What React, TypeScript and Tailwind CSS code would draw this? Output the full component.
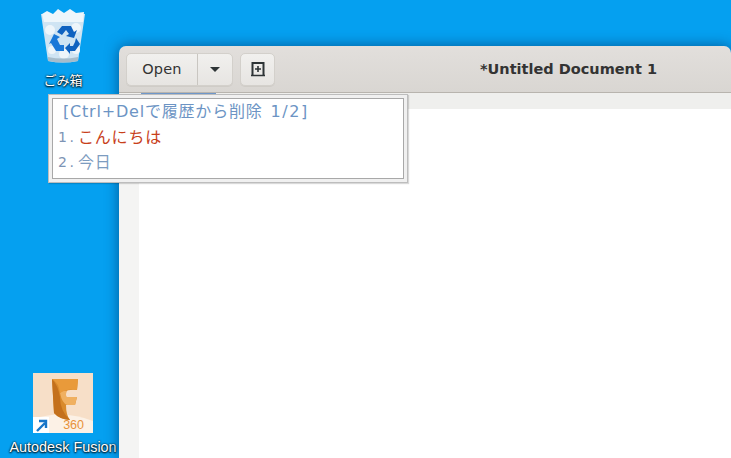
import type { ReactNode } from "react";

const uiFont = "font-['DejaVu_Sans','Noto_Sans_CJK_JP',sans-serif]";

function DesktopIcon({
  label,
  className,
  labelClass,
  children,
}: {
  label: string;
  className: string;
  labelClass: string;
  children: ReactNode;
}) {
  return (
    <div className={`absolute flex flex-col items-center ${className}`}>
      {children}
      <span
        className={`whitespace-nowrap text-white [text-shadow:0_1px_2px_#000,0_0_2px_#000] ${labelClass}`}
      >
        {label}
      </span>
    </div>
  );
}

function RecycleBin() {
  return (
    <svg width="46" height="56" viewBox="0 0 46 56">
      <path d="M1 6 L45 6 L38 53 Q23 56 8 53 Z" fill="#cfe4f3" />
      <path d="M2 6 L7 3 L13 6 L18 1 L24 5 L30 1 L36 5 L44 4 L43 14 L4 14 Z" fill="#eef6fb" />
      <g fill="#eef5fa">
        <circle cx="10" cy="22" r="5" />
        <circle cx="36" cy="20" r="5" />
        <circle cx="12" cy="42" r="4" />
        <circle cx="24" cy="46" r="5" />
        <circle cx="36" cy="42" r="4" />
      </g>
      <path d="M8 49 Q23 52 38 49 L38 53 Q23 56 8 53 Z" fill="#a6bccb" />
      <path d="M22 18 L31 18 L34 24 L37 22 L34 30 L26 28 L29 26 L26 22 L22 27 L17 24 Z" fill="#0f62c0" />
      <path d="M14 26 L20 29 L17 31 L20 37 L24 37 L24 43 L16 43 L11 35 L9 36 Z" fill="#1a78d8" />
      <path d="M36 30 L40 36 L35 43 L30 43 L30 46 L25 40 L30 35 L30 38 L33 38 L35 34 Z" fill="#0f62c0" />
    </svg>
  );
}

function FusionIcon() {
  return (
    <div className="relative h-[60px] w-[60px] overflow-hidden bg-[#f7dfc8]">
      <svg width="60" height="60" viewBox="0 0 60 60" className="absolute left-0 top-0">
        <path d="M0 46 Q30 36 60 48 L60 60 L0 60 Z" fill="#fcf1e6" />
        <path d="M19 6 H45 L44 17 Q36 16 31 19 L31 24 H44 L42 32 H33 Q33 42 37 47 Q26 46 21 40 Z" fill="#d98a2c" />
        <path d="M19 6 Q25 12 27 24 Q27 38 37 47 Q26 46 21 40 Z" fill="#c4701c" />
        <path d="M27 20 Q30 17 34 18 Q32 22 34 24 H44 L42 32 H34 Q29 30 27 20 Z" fill="#f0b060" />
        <path d="M19 6 H45 L44 17 Q34 15 27 20 Q26 10 19 6 Z" fill="#e99a3a" />
      </svg>
      <div className="absolute bottom-0 left-0 flex h-[16px] w-[16px] items-center justify-center bg-white">
        <svg width="13" height="13" viewBox="0 0 13 13">
          <path d="M2 12 L10 4 M4 2 H11 V9" fill="none" stroke="#1976c8" strokeWidth="2.4" />
        </svg>
      </div>
      <span className="absolute bottom-[2px] right-[9px] font-['Liberation_Sans',sans-serif] text-[12.5px] leading-[12px] text-[#e8923c]">
        360
      </span>
    </div>
  );
}

function Toolbar() {
  return (
    <div className="flex h-[47px] items-center rounded-t-[7px] border-b border-[#b8b4ae] bg-gradient-to-b from-[#e2dfdc] to-[#d9d6d2] pl-[7px]">
      <div className="flex h-[33px] items-stretch rounded-[5px] border border-[#d3d0cb] bg-gradient-to-b from-[#f1f0ee] to-[#e7e5e2] text-[#333] shadow-[0_1px_0_#cfccc7]">
        <span className="flex w-[71px] items-center justify-center border-r border-[#c9c6c1] pt-[1px] text-[14.5px] tracking-[0.2px]">Open</span>
        <span className="flex w-[34px] items-center justify-center">
          <span className="mt-[1px] h-0 w-0 border-x-[5px] border-t-[5px] border-x-transparent border-t-[#2e3436]" />
        </span>
      </div>
      <div className="ml-[7px] flex h-[33px] w-[35px] items-center justify-center rounded-[5px] border border-[#d3d0cb] bg-gradient-to-b from-[#f1f0ee] to-[#e7e5e2] shadow-[0_1px_0_#cfccc7]">
        <svg width="16" height="16" viewBox="0 0 16 16">
          <path d="M2.5 15 V2 H13.5 V15" fill="none" stroke="#2e3436" strokeWidth="2" />
          <path d="M1 14.5 H15" stroke="#2e3436" strokeWidth="1.5" />
          <path d="M8 5 V11 M5 8 H11" stroke="#2e3436" strokeWidth="1.6" />
        </svg>
      </div>
      <span className="ml-[205px] whitespace-nowrap pt-[1px] text-[14.5px] font-bold text-[#333]">*Untitled Document 1</span>
    </div>
  );
}

function EditorWindow() {
  return (
    <div className="absolute left-[119px] top-[46px] flex h-[412px] w-[612px] flex-col rounded-t-[7px] shadow-[0_0_14px_rgba(0,40,90,0.6)]">
      <Toolbar />
      <div className="relative h-[16px] bg-[#efefed]">
        <div className="absolute left-[22px] top-0 h-[1px] w-[75px] bg-[#6f97c9]" />
      </div>
      <div className="flex flex-1">
        <div className="w-[20px] bg-[#f4f4f3]" />
        <div className="flex-1 bg-white" />
      </div>
    </div>
  );
}

function ImeCandidates() {
  return (
    <div className="absolute left-[48px] top-[94px] h-[89px] w-[360px] border border-[#bdbdbd] bg-[#f0f0f0] p-[3px] shadow-[1px_1px_1px_rgba(0,0,0,0.15)]">
      <div className="flex h-full flex-col border border-[#a8a8a8] bg-white pl-[5px] text-[16px] leading-[25px] tracking-[0.8px]">
        <div className="h-[26px] whitespace-nowrap pl-[5px] text-[#6c94c4] [word-spacing:2px]">
          [Ctrl+Delで履歴から削除 <span className="tracking-[1.6px]">1/2]</span>
        </div>
        <div className="flex h-[25px]">
          <span className="w-[20px] text-[14px] tracking-[2.5px] text-[#7d94b5]">1.</span>
          <span className="text-[#c8401a]">こんにちは</span>
        </div>
        <div className="flex h-[25px]">
          <span className="w-[20px] text-[14px] tracking-[2.5px] text-[#7d94b5]">2.</span>
          <span className="text-[#7d9cc0]">今日</span>
        </div>
      </div>
    </div>
  );
}

export default function App() {
  return (
    <div className={`relative h-[458px] w-[731px] overflow-hidden bg-[#05a0f0] ${uiFont}`}>
      <DesktopIcon
        label="ごみ箱"
        className="left-[40px] top-[8px] w-[46px]"
        labelClass="mt-[9px] text-[13px] leading-[16px]"
      >
        <RecycleBin />
      </DesktopIcon>
      <DesktopIcon
        label="Autodesk Fusion"
        className="left-[33px] top-[373px] w-[60px]"
        labelClass="mt-[6px] font-['Liberation_Sans',sans-serif] text-[14.4px] leading-[16px]"
      >
        <FusionIcon />
      </DesktopIcon>
      <EditorWindow />
      <ImeCandidates />
    </div>
  );
}
